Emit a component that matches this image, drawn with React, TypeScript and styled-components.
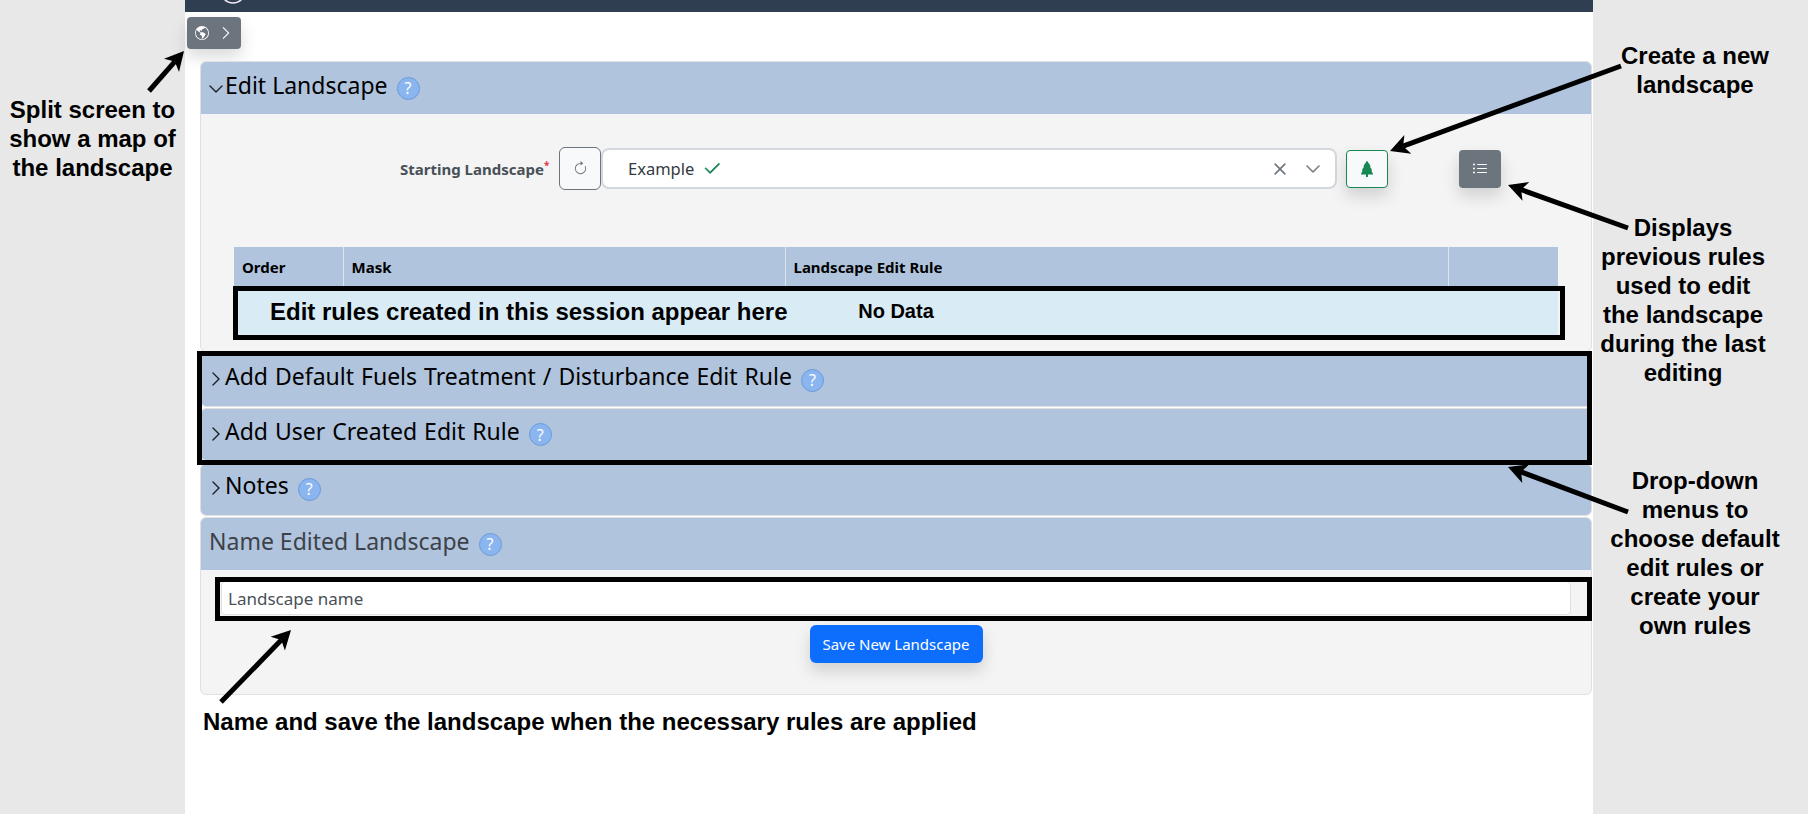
import React from 'react'
import styled, { createGlobalStyle } from 'styled-components'
import {
    BsArrowClockwise,
    BsCheck2,
    BsChevronDown,
    BsChevronRight,
    BsGlobeAmericas,
    BsListUl,
    BsTreeFill,
    BsX,
} from 'react-icons/bs'

const GlobalStyle = createGlobalStyle`
    html, body {
        margin: 0;
        padding: 0;
    }

    body {
        font-family: "Noto Sans", "Open Sans", sans-serif;
        background: #e8e8e8;
        overflow: hidden;
    }

    * {
        box-sizing: border-box;
    }
`

const Page = styled.div`
    position: relative;
    height: 814px;
    padding: 0 215px 0 185px;
    background: #e8e8e8;
`

const Center = styled.main`
    display: flex;
    flex-direction: column;
    height: 100%;
    background: #fff;
`

const TopBar = styled.header`
    flex: none;
    height: 12px;
    padding-left: 35px;
    background: #2f3e50;
    overflow: hidden;
`

const Logo = styled.svg`
    display: block;
    width: 26px;
    height: 12px;
`

const MapToggle = styled.button`
    flex: none;
    display: flex;
    align-items: center;
    justify-content: center;
    gap: 10px;
    width: 54px;
    height: 32px;
    margin: 5px 0 0 2px;
    padding: 0;
    border: 0;
    border-radius: 4px;
    color: #fff;
    font-size: 14px;
    background: #6c757d;
    box-shadow: 0 8px 16px rgba(0, 0, 0, 0.15);

    svg:last-child {
        stroke: currentColor;
        stroke-width: 0.5;
    }
`

const Accordion = styled.div`
    display: flex;
    flex-direction: column;
    gap: 1.5px;
    margin: 12px 1px 0 15px;
`

const Item = styled.section`
    border: 1px solid #e0e0e0;
    border-radius: 6px;
    background: #f4f4f4;
    overflow: hidden;
`

const Header = styled.div<{ $muted?: boolean }>`
    display: flex;
    align-items: center;
    height: 52px;
    padding-left: ${p => (p.$muted ? '8px' : '7px')};
    font-size: 23px;
    color: ${p => (p.$muted ? '#3c4248' : '#000')};
    background: #b0c4de;
`

const RuleHeader = styled(Header)`
    height: 51px;
    word-spacing: 1px;
`

const Caret = styled.span<{ $open?: boolean }>`
    display: flex;
    align-items: center;
    width: 17px;
    margin-top: ${p => (p.$open ? '1px' : '-2px')};
    font-size: 16px;
    color: #111;

    svg {
        stroke: currentColor;
        stroke-width: 0.4;
    }
`

const Title = styled.span<{ $lift: number }>`
    margin-top: ${p => -p.$lift}px;
`

const Help = styled.span`
    display: flex;
    align-items: center;
    justify-content: center;
    width: 23px;
    height: 23px;
    margin-left: 9px;
    border: 1px solid #6d9ad8;
    border-radius: 50%;
    color: #fff;
    font-size: 16px;
    background: #8ab5ef;
`

const EditBody = styled.div`
    padding: 33px 0 16px 33px;
`

const LandscapeRow = styled.div`
    display: flex;
    align-items: center;
    height: 43px;
    padding-left: 166px;
`

const FieldLabel = styled.label`
    width: 150px;
    margin-right: 9px;
    font-size: 15px;
    font-weight: 700;
    white-space: nowrap;
    color: #495057;
`

const Required = styled.sup`
    font-size: 10px;
    line-height: 0;
    color: #dc3545;
`

const RefreshButton = styled.button`
    display: flex;
    align-items: center;
    justify-content: center;
    width: 42px;
    height: 43px;
    padding: 0;
    border: 1px solid #6c757d;
    border-radius: 6px;
    color: #6c757d;
    font-size: 15px;
    background: #f8f9fa;
`

const Select = styled.div`
    display: flex;
    align-items: center;
    width: 736px;
    height: 41px;
    padding: 0 14px 0 25px;
    border: 2px solid #d3d7de;
    border-radius: 8px;
    background: #fff;
`

const SelectValue = styled.span`
    display: flex;
    align-items: center;
    gap: 8px;
    flex: 1;
    font-size: 16.5px;
    color: #343a40;

    svg {
        color: #198754;
        font-size: 20px;
        stroke: currentColor;
        stroke-width: 0.5;
    }
`

const ClearIcon = styled.span`
    display: flex;
    margin-right: 12px;
    color: #6c757d;
    font-size: 26px;
`

const CaretIcon = styled.span`
    display: flex;
    color: #6c757d;
    font-size: 16px;

    svg {
        stroke: currentColor;
        stroke-width: 0.6;
    }
`

const IconButton = styled.button<{ $variant: 'tree' | 'list' }>`
    display: flex;
    align-items: center;
    justify-content: center;
    width: 42px;
    height: 38px;
    margin-left: ${p => (p.$variant === 'tree' ? '9px' : '71px')};
    padding: 0;
    border: ${p => (p.$variant === 'tree' ? '1px solid #198754' : '0')};
    border-radius: 4px;
    color: ${p => (p.$variant === 'tree' ? '#198754' : '#fff')};
    font-size: 16px;
    background: ${p => (p.$variant === 'tree' ? '#f8f9fa' : '#6c757d')};
    box-shadow: 0 8px 16px rgba(0, 0, 0, 0.15);
`

const RulesTable = styled.table`
    width: 1324px;
    margin-top: 57px;
    border-collapse: collapse;
    table-layout: fixed;
`

const HeadCell = styled.th`
    height: 41px;
    padding: 0 8px 2px;
    border-left: 1px solid #dde3ec;
    font-size: 15px;
    font-weight: 700;
    text-align: left;
    color: #000;
    background: #b0c4de;

    &:first-child {
        border-left: 0;
    }
`

const EmptyCell = styled.td`
    height: 47px;
    padding: 0;
    font-family: "Liberation Sans", Arial, sans-serif;
    font-size: 20px;
    font-weight: 700;
    text-align: center;
    color: #000;
    background: #d9ebf5;
`

const NameBody = styled.div`
    display: flex;
    flex-direction: column;
    align-items: center;
    height: 124px;
    padding: 11px 20px 0 20px;
`

const NameInput = styled.input`
    width: 100%;
    height: 34px;
    padding: 0 6px;
    border: 1px solid #dee2e6;
    border-radius: 4px;
    font: inherit;
    font-size: 17px;
    background: #fff;

    &::placeholder {
        color: #495057;
        opacity: 1;
    }
`

const SaveButton = styled.button`
    width: 173px;
    height: 38px;
    margin-top: 10px;
    padding: 0;
    border: 0;
    border-radius: 6px;
    font: inherit;
    font-size: 15px;
    color: #fff;
    background: #0d6efd;
    box-shadow: 0 8px 16px rgba(0, 0, 0, 0.15);
`

const Frame = styled.div<{ $x: number; $y: number; $w: number; $h: number }>`
    position: absolute;
    left: ${p => p.$x}px;
    top: ${p => p.$y}px;
    width: ${p => p.$w}px;
    height: ${p => p.$h}px;
    border: 5px solid #000;
    pointer-events: none;
`

const Note = styled.div<{ $x: number; $y: number; $w: number; $align?: string }>`
    position: absolute;
    left: ${p => p.$x}px;
    top: ${p => p.$y}px;
    width: ${p => p.$w}px;
    font-family: "Liberation Sans", Arial, sans-serif;
    font-size: 24px;
    font-weight: 700;
    line-height: 29px;
    white-space: nowrap;
    text-align: ${p => p.$align || 'center'};
    color: #000;
`

const ArrowLayer = styled.svg`
    position: absolute;
    left: 0;
    top: 0;
    width: 1808px;
    height: 814px;
    pointer-events: none;
`

type ArrowProps = { x1: number; y1: number; x2: number; y2: number }

const Arrow: React.FC<ArrowProps> = ({ x1, y1, x2, y2 }) => {
    const len = Math.hypot(x2 - x1, y2 - y1)
    const ux = (x2 - x1) / len
    const uy = (y2 - y1) / len
    // back of the head sits a bit behind the tip, the shaft stops inside it
    const bx = x2 - ux * 19
    const by = y2 - uy * 19
    const nx = x2 - ux * 14
    const ny = y2 - uy * 14
    const px = -uy * 10
    const py = ux * 10
    return (
        <g>
            <line x1={x1} y1={y1} x2={nx} y2={ny} stroke="#000" strokeWidth={5} />
            <polygon
                fill="#000"
                points={`${x2},${y2} ${bx + px},${by + py} ${nx},${ny} ${bx - px},${by - py}`}
            />
        </g>
    )
}

const Heading: React.FC<{ title: string }> = ({ title }) => (
    <RuleHeader>
        <Caret>
            <BsChevronRight />
        </Caret>
        <Title $lift={8}>{title}</Title>
        <Help>?</Help>
    </RuleHeader>
)

const App: React.FC = () => (
    <Page>
        <GlobalStyle />
        <Center>
            <TopBar>
                <Logo viewBox="0 0 26 12">
                    <circle cx="13" cy="-9" r="12" fill="none" stroke="#f2e9f2" strokeWidth="1.5" />
                </Logo>
            </TopBar>
            <MapToggle aria-label="Split screen">
                <BsGlobeAmericas />
                <BsChevronRight />
            </MapToggle>
            <Accordion>
                <Item>
                    <Header>
                        <Caret $open>
                            <BsChevronDown />
                        </Caret>
                        <Title $lift={6}>Edit Landscape</Title>
                        <Help>?</Help>
                    </Header>
                    <EditBody>
                        <LandscapeRow>
                            <FieldLabel>
                                Starting Landscape<Required>*</Required>
                            </FieldLabel>
                            <RefreshButton aria-label="Refresh">
                                <BsArrowClockwise />
                            </RefreshButton>
                            <Select>
                                <SelectValue>
                                    Example <BsCheck2 />
                                </SelectValue>
                                <ClearIcon>
                                    <BsX />
                                </ClearIcon>
                                <CaretIcon>
                                    <BsChevronDown />
                                </CaretIcon>
                            </Select>
                            <IconButton $variant="tree" aria-label="Create landscape">
                                <BsTreeFill />
                            </IconButton>
                            <IconButton $variant="list" aria-label="Previous rules">
                                <BsListUl />
                            </IconButton>
                        </LandscapeRow>
                        <RulesTable>
                            <colgroup>
                                <col width="109" />
                                <col width="442" />
                                <col width="663" />
                                <col width="110" />
                            </colgroup>
                            <thead>
                                <tr>
                                    <HeadCell>Order</HeadCell>
                                    <HeadCell>Mask</HeadCell>
                                    <HeadCell>Landscape Edit Rule</HeadCell>
                                    <HeadCell />
                                </tr>
                            </thead>
                            <tbody>
                                <tr>
                                    <EmptyCell colSpan={4}>No Data</EmptyCell>
                                </tr>
                            </tbody>
                        </RulesTable>
                    </EditBody>
                </Item>
                <Item>
                    <Heading title="Add Default Fuels Treatment / Disturbance Edit Rule" />
                </Item>
                <Item>
                    <Heading title="Add User Created Edit Rule" />
                </Item>
                <Item>
                    <Heading title="Notes" />
                </Item>
                <Item>
                    <Header $muted>
                        <Title $lift={6}>Name Edited Landscape</Title>
                        <Help>?</Help>
                    </Header>
                    <NameBody>
                        <NameInput placeholder="Landscape name" />
                        <SaveButton>Save New Landscape</SaveButton>
                    </NameBody>
                </Item>
            </Accordion>
        </Center>

        <Frame $x={233} $y={286} $w={1332} $h={54} />
        <Frame $x={197} $y={351} $w={1395} $h={114} />
        <Frame $x={215} $y={577} $w={1377} $h={44} />

        <ArrowLayer viewBox="0 0 1808 814">
            <Arrow x1={149} y1={91} x2={184} y2={51} />
            <Arrow x1={1621} y1={66} x2={1390} y2={151} />
            <Arrow x1={1628} y1={228} x2={1508} y2={185} />
            <Arrow x1={1628} y1={512} x2={1508} y2={467} />
            <Arrow x1={221} y1={702} x2={291} y2={630} />
        </ArrowLayer>

        <Note $x={0} $y={95} $w={185}>
            Split screen to
            <br />
            show a map of
            <br />
            the landscape
        </Note>
        <Note $x={1595} $y={41} $w={200}>
            Create a new
            <br />
            landscape
        </Note>
        <Note $x={1594} $y={213} $w={178}>
            Displays
            <br />
            previous rules
            <br />
            used to edit
            <br />
            the landscape
            <br />
            during the last
            <br />
            editing
        </Note>
        <Note $x={1594} $y={466} $w={202}>
            Drop-down
            <br />
            menus to
            <br />
            choose default
            <br />
            edit rules or
            <br />
            create your
            <br />
            own rules
        </Note>
        <Note $x={270} $y={297} $w={520} $align="left">
            Edit rules created in this session appear here
        </Note>
        <Note $x={203} $y={707} $w={780} $align="left">
            Name and save the landscape when the necessary rules are applied
        </Note>
    </Page>
)

export default App
